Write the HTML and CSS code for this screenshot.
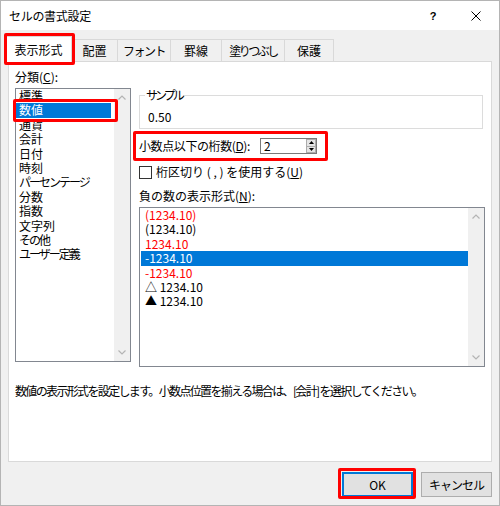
FILE: index.html
```html
<!DOCTYPE html>
<html lang="ja">
<head>
<meta charset="utf-8">
<title>セルの書式設定</title>
<link rel="stylesheet" href="styles.css">
</head>
<body>
<div class="dialog">
  <div class="titlebar">
    <span class="title">セルの書式設定</span>
    <span class="tb-help">?</span>
    <span class="tb-close"><svg width="10" height="10" viewBox="0 0 10 10"><path d="M0.5 0.5 L9.5 9.5 M9.5 0.5 L0.5 9.5" stroke="#000" stroke-width="1" fill="none"/></svg></span>
  </div>
  <div class="client">
    <div class="tabs">
      <div class="tab active annot annot-tab">表示形式</div>
      <div class="tab tab-2">配置</div>
      <div class="tab tab-3"><span class="ls-15">フォント</span></div>
      <div class="tab tab-4">罫線</div>
      <div class="tab tab-5"><span class="ls-25">塗りつぶし</span></div>
      <div class="tab tab-6">保護</div>
    </div>
    <div class="panel">
      <div class="grid">
        <div class="leftcol">
          <div class="label">分類(<u>C</u>):</div>
          <div class="listbox cat">
            <ul class="items">
              <li>標準</li>
              <li class="sel annot annot-item">数値</li>
              <li>通貨</li>
              <li>会計</li>
              <li>日付</li>
              <li>時刻</li>
              <li class="ls-2">パーセンテージ</li>
              <li>分数</li>
              <li>指数</li>
              <li>文字列</li>
              <li class="ls-2">その他</li>
              <li class="ls-2">ユーザー定義</li>
            </ul>
            <div class="vscroll">
              <span class="sb-btn"><svg width="8" height="5" viewBox="0 0 8 5"><polyline points="0.5,4.5 4,1 7.5,4.5" fill="none" stroke="#b4b4b4" stroke-width="1.2"/></svg></span>
              <span class="sb-btn"><svg width="8" height="5" viewBox="0 0 8 5"><polyline points="0.5,0.5 4,4 7.5,0.5" fill="none" stroke="#b4b4b4" stroke-width="1.2"/></svg></span>
            </div>
          </div>
        </div>
        <div class="rightcol">
          <fieldset class="sample">
            <legend><span class="ls-3">サンプル</span></legend>
            <div class="sample-val">0.50</div>
          </fieldset>
          <div class="decimals annot annot-dec">
            <span class="dec-label">小数点以下の桁数(<u>D</u>):</span>
            <span class="spin">
              <span class="spin-val">2</span>
              <span class="spin-btns">
                <span class="spin-btn"><svg width="5" height="3" viewBox="0 0 5 3"><polygon points="0,3 2.5,0 5,3" fill="#000"/></svg></span>
                <span class="spin-btn"><svg width="5" height="3" viewBox="0 0 5 3"><polygon points="0,0 5,0 2.5,3" fill="#000"/></svg></span>
              </span>
            </span>
          </div>
          <div class="check"><span class="box"></span>桁区切り ( , ) を使用する(<u>U</u>)</div>
          <div class="label neg-label">負の数の表示形式(<u>N</u>):</div>
          <div class="listbox neg">
            <ul class="items">
              <li class="red">(1234.10)</li>
              <li>(1234.10)</li>
              <li class="red">1234.10</li>
              <li class="sel">-1234.10</li>
              <li class="red">-1234.10</li>
              <li>△ 1234.10</li>
              <li>▲ 1234.10</li>
            </ul>
            <div class="vscroll">
              <span class="sb-btn"><svg width="8" height="5" viewBox="0 0 8 5"><polyline points="0.5,4.5 4,1 7.5,4.5" fill="none" stroke="#b4b4b4" stroke-width="1.2"/></svg></span>
              <span class="sb-btn"><svg width="8" height="5" viewBox="0 0 8 5"><polyline points="0.5,0.5 4,4 7.5,0.5" fill="none" stroke="#b4b4b4" stroke-width="1.2"/></svg></span>
            </div>
          </div>
        </div>
      </div>
      <p class="desc">数値の表示形式を設定します。小数点位置を揃える場合は、[会計] を選択してください。</p>
    </div>
    <div class="buttons">
      <button class="btn default annot annot-ok">OK</button>
      <button class="btn"><span class="ls-1">キャンセル</span></button>
    </div>
  </div>
</div>
</body>
</html>
```
FILE: styles.css
```css
* { box-sizing: border-box; }
html, body { margin: 0; padding: 0; }
body {
  width: 500px;
  height: 506px;
  font-family: "Noto Sans CJK JP", "Noto Sans", sans-serif;
  font-size: 12px;
  color: #000;
  background: #fff;
}
.ls-1 { letter-spacing: -1px; }
.ls-15 { letter-spacing: -1.5px; }
.ls-2 { letter-spacing: -2px; }
.ls-25 { letter-spacing: -2.5px; }
.ls-3 { letter-spacing: -3px; }
.dialog {
  width: 500px;
  height: 506px;
  border: 1px solid #b4b4b4;
  background: #f0f0f0;
  display: flex;
  flex-direction: column;
}
.titlebar {
  height: 29px;
  flex: none;
  background: #fff;
  display: flex;
  align-items: center;
  padding-left: 8px;
}
.title { flex: 1; line-height: 14px; letter-spacing: -0.3px; }
.tb-help {
  width: 40px;
  text-align: center;
  font: bold 11px "Liberation Sans", sans-serif;
}
.tb-close {
  width: 46px;
  display: flex;
  justify-content: center;
  align-items: center;
}
.client {
  flex: 1;
  padding: 6px 7px 0 7px;
  display: flex;
  flex-direction: column;
}
.tabs {
  display: flex;
  align-items: flex-end;
  height: 25px;
}
.tab {
  height: 22px;
  border-top: 1px solid #d9d9d9;
  border-right: 1px solid #d9d9d9;
  background: #f0f0f0;
  display: flex;
  align-items: center;
  justify-content: center;
  line-height: 14px;
  white-space: nowrap;
}
.tab.active {
  width: 67px;
  height: 26px;
  margin-left: -3px;
  margin-bottom: -1px;
  padding-top: 1px;
  background: #fff;
  border-left: 1px solid #d9d9d9;
  position: relative;
  z-index: 1;
}
.tab-2 { width: 46px; }
.tab-3 { width: 53px; }
.tab-4 { width: 51px; }
.tab-5 { width: 63px; }
.tab-6 { width: 49px; }
.panel {
  height: 401px;
  flex: none;
  background: #fff;
  border: 1px solid #d9d9d9;
  padding: 8px 6px 0 6px;
}
.grid {
  display: grid;
  grid-template-columns: 116px 1fr;
  column-gap: 8px;
  align-items: start;
}
.label { line-height: 14px; white-space: nowrap; }
.listbox {
  border: 1px solid #828790;
  background: #fff;
  display: flex;
}
.cat { margin-top: 4px; height: 274px; }
.items {
  list-style: none;
  margin: 0;
  padding: 0;
  flex: 1;
  min-width: 0;
}
.items li {
  height: 14.4px;
  line-height: 14.4px;
  padding-left: 3px;
  white-space: nowrap;
}
.cat .items li.sel { margin-right: 3px; }
.neg .items { padding-left: 1px; }
.neg .items li { padding-left: 4px; }
.items li.sel { background: #0078d7; color: #fff; }
.items li.red { color: #ff0000; }
.vscroll {
  width: 16px;
  flex: none;
  background: #f0f0f0;
  display: flex;
  flex-direction: column;
  justify-content: space-between;
}
.sb-btn {
  height: 17px;
  display: flex;
  align-items: center;
  justify-content: center;
}
.rightcol { padding-top: 18px; }
.sample {
  margin: 0 2px 0 0;
  padding: 8px 8px 4px 8px;
  border: 1px solid #dcdcdc;
  min-width: 0;
}
.sample legend {
  padding: 0 1px;
  margin-left: -3px;
  line-height: 14px;
}
.sample-val { line-height: 14px; }
.decimals {
  display: flex;
  align-items: center;
  width: max-content;
  height: 16px;
  margin-top: 9px;
}
.dec-label { width: 121px; line-height: 16px; white-space: nowrap; letter-spacing: -0.4px; }
.spin {
  width: 57px;
  height: 16px;
  border: 1px solid #7a7a7a;
  background: #fff;
  display: flex;
}
.spin-val { flex: 1; padding-left: 3px; line-height: 14px; }
.spin-btns {
  width: 10px;
  display: flex;
  flex-direction: column;
}
.spin-btn {
  flex: 1;
  background: #e5e5e5;
  border: 1px solid #acacac;
  display: flex;
  align-items: center;
  justify-content: center;
}
.spin-btn + .spin-btn { border-top: none; }
.check {
  display: flex;
  align-items: center;
  height: 14px;
  line-height: 14px;
  margin-top: 11px;
  white-space: pre;
}
.box {
  width: 13px;
  height: 13px;
  border: 1px solid #333;
  background: #fff;
  margin-right: 4px;
  flex: none;
}
.neg-label { margin-top: 10px; }
.neg { margin-top: 4px; height: 160px; }
.desc {
  margin: 17px 0 0 0;
  line-height: 14px;
  white-space: nowrap;
  letter-spacing: -1.65px;
}
.buttons {
  display: flex;
  justify-content: flex-end;
  gap: 8px;
  margin-top: 10px;
}
.btn {
  width: 71px;
  height: 25px;
  padding: 0;
  background: #e1e1e1;
  border: 1px solid #adadad;
  font: inherit;
  color: #000;
}
.btn.default {
  border-color: #0078d7;
  box-shadow: inset 0 0 0 1px #0078d7;
}
.annot { position: relative; }
.annot::after {
  content: "";
  position: absolute;
  border: 3px solid #ff0000;
  border-radius: 2px;
  pointer-events: none;
}
.annot-tab::after { inset: -4px -4px -3px -2px; }
.annot-item::after { inset: -4px -7px -4px -3px; }
.annot-dec::after { inset: -7px -11px -7px -6px; }
.annot-ok::after { inset: -5px -4px -3px -5px; }
```
